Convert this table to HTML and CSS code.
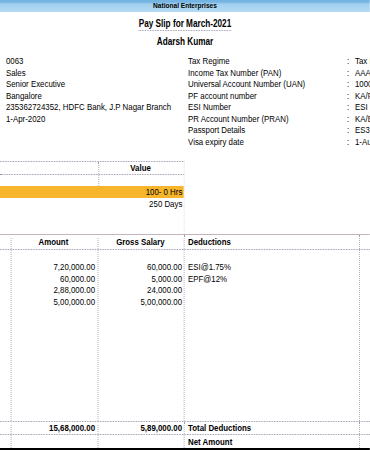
FILE: index.html
```html
<!DOCTYPE html>
<html>
<head>
<meta charset="utf-8">
<link rel="stylesheet" href="styles.css">
</head>
<body>
<div class="sheet">
<div class="page">
  <div class="bar">National Enterprises</div>
  <div class="title"><span>Pay Slip for March-2021</span></div>
  <div class="name">Adarsh Kumar</div>

  <div class="info">
    <div class="left">
      <div>0063</div>
      <div>Sales</div>
      <div>Senior Executive</div>
      <div>Bangalore</div>
      <div>235362724352, HDFC Bank, J.P Nagar Branch</div>
      <div>1-Apr-2020</div>
    </div>
    <div class="right">
      <div>Tax Regime</div><div>:</div><div>Tax Regime (Old)</div>
      <div>Income Tax Number (PAN)</div><div>:</div><div>AAAPL1234C</div>
      <div>Universal Account Number (UAN)</div><div>:</div><div>100012345678</div>
      <div>PF account number</div><div>:</div><div>KA/PF/BNG/0063</div>
      <div>ESI Number</div><div>:</div><div>ESI 1234567</div>
      <div>PR Account Number (PRAN)</div><div>:</div><div>KA/BNG/0001</div>
      <div>Passport Details</div><div>:</div><div>ES3-123456</div>
      <div>Visa expiry date</div><div>:</div><div>1-Aug-2025</div>
    </div>
  </div>

  <div class="att">
    <div class="att-row"><div class="att-l div"></div><div class="att-v bold center">Value</div></div>
    <div class="att-row blank"><div class="att-l div"></div><div class="att-v"></div></div>
    <div class="att-row hl"><div class="att-l"></div><div class="att-v right">100- 0 Hrs</div></div>
    <div class="att-row"><div class="att-l"></div><div class="att-v right">250 Days</div></div>
    <div class="att-fill"></div>
  </div>

  <div class="pay">
    <div class="prow head">
      <div class="pc c0"></div>
      <div class="pc c1 bold center">Amount</div>
      <div class="pc c2 bold center">Gross Salary</div>
      <div class="pc c3 bold">Deductions</div>
      <div class="pc c4"></div>
    </div>
    <div class="prow body">
      <div class="pc c0"></div>
      <div class="pc c1 right">
        <div>7,20,000.00</div>
        <div>60,000.00</div>
        <div>2,88,000.00</div>
        <div>5,00,000.00</div>
      </div>
      <div class="pc c2 right">
        <div>60,000.00</div>
        <div>5,000.00</div>
        <div>24,000.00</div>
        <div>5,00,000.00</div>
      </div>
      <div class="pc c3">
        <div>ESI@1.75%</div>
        <div>EPF@12%</div>
      </div>
      <div class="pc c4"></div>
    </div>
    <div class="prow total">
      <div class="pc c0"></div>
      <div class="pc c1 right bold">15,68,000.00</div>
      <div class="pc c2 right bold">5,89,000.00</div>
      <div class="pc c3 bold">Total Deductions</div>
      <div class="pc c4"></div>
    </div>
    <div class="prow net">
      <div class="pc c0"></div>
      <div class="pc c1"></div>
      <div class="pc c2"></div>
      <div class="pc c3 bold">Net Amount</div>
      <div class="pc c4"></div>
    </div>
  </div>
</div>
</div>
</body>
</html>
```
FILE: styles.css
```css
* { box-sizing: border-box; }
html, body { margin: 0; padding: 0; background: #fff; overflow: hidden; }
body {
  width: 370px;
  height: 450px;
  font-family: "Liberation Sans", Arial, sans-serif;
  font-size: 9.6px;
  color: #000;
}
.sheet {
  width: 370px;
  height: 450px;
  overflow: hidden;
}
/* The source report is drawn with a narrow typeface; the whole sheet
   is laid out at full width and compressed horizontally. */
.page {
  width: 451.2px;
  transform: scaleX(0.82);
  transform-origin: 0 0;
}
.bold { font-weight: bold; }
.center { text-align: center; }
.right { text-align: right; }

.bar {
  height: 12px;
  line-height: 12px;
  text-align: center;
  font-weight: bold;
  font-size: 8px;
  background: linear-gradient(#74b4e2 0, #74b4e2 2px, #a3d0ef 4px, #b3daf3 100%);
}
.title {
  margin-top: 6px;
  height: 13px;
  text-align: center;
  font-size: 10px;
  font-weight: bold;
}
.title span {
  display: inline-block;
  vertical-align: top;
  line-height: 12px;
  border-bottom: 1px dotted #9c94b0;
}
.name {
  margin-top: 5px;
  line-height: 12px;
  text-align: center;
  font-weight: bold;
  font-size: 10px;
}

.info {
  margin-top: 7px;
  display: flex;
  line-height: 11.5px;
  white-space: nowrap;
}
.left { flex: none; width: 229.3px; padding-left: 7.3px; }
.info .right {
  flex: 1;
  min-width: 0;
  display: grid;
  grid-template-columns: 193.9px 9.7px 1fr;
  text-align: left;
  overflow: hidden;
}

.att {
  margin-top: 14px;
  width: 225.4px;
  border-top: 1px dotted #9890a8;
  border-right: 1px dotted #a49cb4;
}
.att-row { display: flex; height: 12px; line-height: 12px; }
.att-row:first-child { border-bottom: 1px dotted #9890a8; height: 13px; }
.att-row.blank { height: 11px; }
.att-l { flex: none; width: 120.5px; }
.att-l.div { border-right: 1px dotted #a49cb4; }
.att-v { flex: 1; padding-right: 2px; white-space: nowrap; }
.att-row.hl { background: #f7b52c; }
.att-fill { height: 24px; }

.pay {
  border-top: 1px solid #c4b4bc;
}
.prow {
  display: grid;
  grid-template-columns: 14.4px 106.1px 104.9px 213.4px 1fr;
}
.pc {
  border-right: 1px dotted #a49cb4;
  white-space: nowrap;
  overflow: hidden;
}
.pc.c4 { border-right: none; }
.c1 { padding-right: 3.6px; }
.c2 { padding-right: 2.4px; }
.c3 { padding-left: 3.9px; }
.prow.head { height: 15px; line-height: 14px; border-bottom: 1px dotted #9890a8; }
.prow.body { height: 172px; border-bottom: 1px dotted #9890a8; }
.prow.body .pc { padding-top: 11px; line-height: 11.5px; }
.prow.total { height: 13px; line-height: 12px; border-bottom: 1px dotted #9890a8; }
.prow.net { height: 15px; line-height: 13px; border-bottom: 2px solid #000; }
```
